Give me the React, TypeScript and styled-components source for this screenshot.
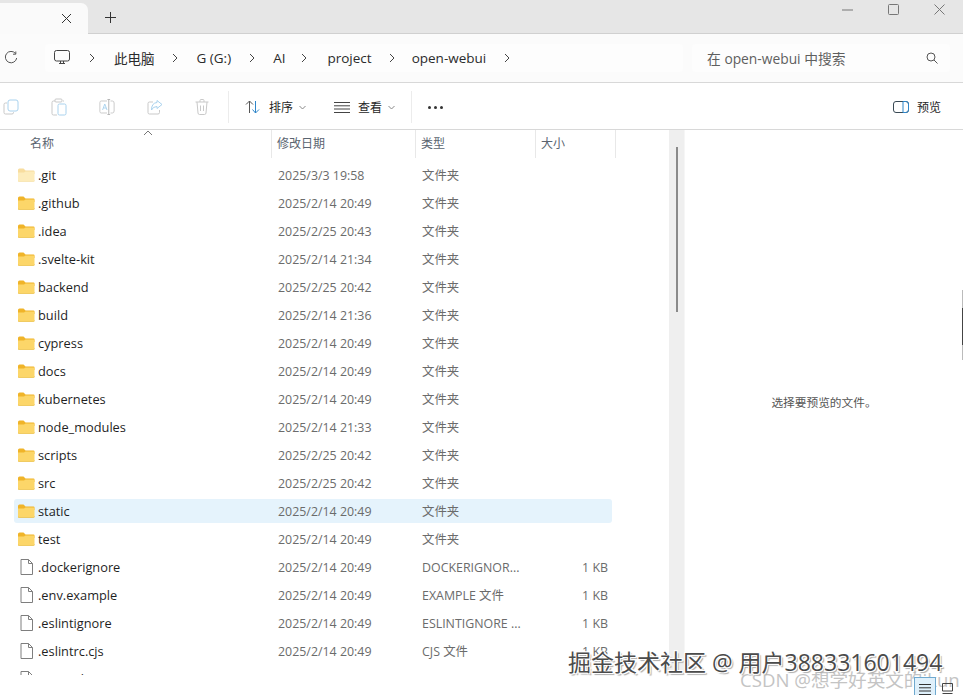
import React from "react";
import styled, { createGlobalStyle } from "styled-components";

const fontStack = `"Open Sans", "Noto Sans CJK SC", sans-serif`;

const GlobalStyle = createGlobalStyle`
  html, body {
    margin: 0;
    padding: 0;
    background: #fff;
    overflow: hidden;
  }
  * {
    box-sizing: border-box;
  }
`;

const Page = styled.div`
  position: relative;
  width: 963px;
  height: 695px;
  overflow: hidden;
  display: flex;
  flex-direction: column;
  font-family: ${fontStack};
  color: #1c1c1c;
  background: #fff;
`;

/* title bar */
const TitleBar = styled.div`
  height: 34px;
  flex: none;
  display: flex;
  align-items: flex-end;
  background: #e6e6e6;
  border-bottom: 1px solid #d0d0d0;
`;

const ActiveTab = styled.div`
  width: 88px;
  height: 31px;
  margin-bottom: -1px;
  padding: 0 16px 1px 0;
  display: flex;
  align-items: center;
  justify-content: flex-end;
  background: #fafafa;
  border-top-right-radius: 7px;
`;

const NewTab = styled.div`
  width: 44px;
  height: 30px;
  padding-bottom: 1px;
  display: flex;
  align-items: center;
  justify-content: center;
`;

const WindowButtons = styled.div`
  margin-left: auto;
  height: 34px;
  padding: 0 18px 13px 0;
  display: flex;
  align-items: center;
  gap: 35px;
`;

/* address bar */
const AddressBar = styled.div`
  height: 49px;
  flex: none;
  display: flex;
  align-items: center;
  padding: 0 0 1px 4px;
  background: #fbfbfb;
  border-bottom: 1px solid #d8d8d8;
`;

const Breadcrumb = styled.div`
  width: 638px;
  height: 28px;
  margin-left: 27px;
  padding-left: 9px;
  display: flex;
  align-items: center;
  background: #fdfdfd;
  border-radius: 4px;
  font-size: 13.5px;
`;

const Crumb = styled.span`
  color: #2b2b2b;
  white-space: nowrap;
`;

const Chevron = styled.svg<{ $left: number; $right: number }>`
  width: 8px;
  height: 10px;
  flex: none;
  margin: 0 ${(p) => p.$right}px 0 ${(p) => p.$left}px;
`;

const SearchBox = styled.div`
  width: 258px;
  height: 28px;
  margin-left: 9px;
  padding: 0 12px 0 15px;
  display: flex;
  align-items: center;
  justify-content: space-between;
  background: #fdfdfd;
  border-radius: 4px;
  font-size: 13.8px;
  color: #5f5f5f;
`;

/* command bar */
const CommandBar = styled.div`
  height: 47px;
  flex: none;
  display: flex;
  align-items: center;
  padding: 2px 0 0 3px;
  background: #fff;
  border-bottom: 1px solid #d8d8d8;
`;

const GhostIcons = styled.div`
  display: flex;
  align-items: center;
  gap: 32px;
  width: 225px;
`;

const BarDivider = styled.div`
  width: 1px;
  height: 32px;
  flex: none;
  background: #ececec;
`;

const BarButton = styled.div<{ $pad: number; $width: number }>`
  width: ${(p) => p.$width}px;
  padding-left: ${(p) => p.$pad}px;
  display: flex;
  align-items: center;
  gap: 8px;
  font-size: 12px;
  color: #262626;
  white-space: nowrap;
`;

const Caret = styled.svg`
  width: 7px;
  height: 5px;
  margin-left: -2px;
`;

const MoreDots = styled.div`
  margin-left: 16px;
  display: flex;
  gap: 3px;
`;

const Dot = styled.i`
  display: block;
  width: 3px;
  height: 3px;
  border-radius: 50%;
  background: #333;
`;

const PreviewButton = styled.div`
  margin-left: auto;
  padding-right: 22px;
  display: flex;
  align-items: center;
  gap: 8px;
  font-size: 12px;
  color: #262626;
`;

/* body */
const Body = styled.div`
  flex: 1;
  min-height: 0;
  display: flex;
  align-items: flex-start;
`;

const Explorer = styled.div`
  width: 669px;
  height: 545px;
  flex: none;
  overflow: hidden;
  position: relative;
`;

const HeaderRow = styled.div`
  height: 28px;
  display: grid;
  grid-template-columns: 272px 144px 120px 80px;
  font-size: 12px;
  color: #5a6470;
  margin-bottom: 5px;
`;

const HeaderCell = styled.div<{ $first?: boolean }>`
  position: relative;
  display: flex;
  align-items: center;
  padding-left: ${(p) => (p.$first ? 30 : 5)}px;
  padding-bottom: 3px;
  border-right: 1px solid #e8e8e8;
`;

const SortArrow = styled.svg`
  position: absolute;
  left: 143px;
  top: 0;
  width: 10px;
  height: 6px;
`;

const Row = styled.div<{ $selected?: boolean }>`
  width: 598px;
  height: 24px;
  margin: 0 0 4px 14px;
  display: grid;
  grid-template-columns: 264px 144px 120px 66px;
  align-items: center;
  font-size: 12.4px;
  border-radius: 3px;
  background: ${(p) => (p.$selected ? "#e5f3fc" : "transparent")};
`;

const NameCell = styled.div`
  display: flex;
  align-items: center;
  gap: 3px;
  padding-left: 4px;
  font-size: 12.8px;
  color: #1f1f1f;
  white-space: nowrap;
`;

const IconSlot = styled.span`
  width: 17px;
  height: 16px;
  display: flex;
  justify-content: center;
  align-items: center;
  flex: none;
`;

const Cell = styled.div`
  color: #6b6b6b;
  white-space: nowrap;
  overflow: hidden;
`;

const SizeCell = styled(Cell)`
  text-align: right;
`;

const ScrollTrack = styled.div`
  width: 16px;
  height: 545px;
  flex: none;
  padding: 17px 0 0 7px;
  background: #efefef;
  border-right: 1px solid #f6f6f6;
`;

const ScrollThumb = styled.div`
  width: 2px;
  height: 165px;
  background: #8a8a8a;
`;

const PreviewPane = styled.div`
  flex: 1;
  height: 545px;
  padding-bottom: 2px;
  display: flex;
  align-items: center;
  justify-content: center;
  font-size: 11.7px;
  color: #555;
`;

/* things lying over the page */
const Watermark = styled.div`
  position: absolute;
  left: 568px;
  top: 648px;
  font-size: 23px;
  line-height: 28px;
  color: #4b4b4b;
  white-space: nowrap;
  text-shadow: 1px 1px 0 #fff, -1px -1px 0 #fff, 1px -1px 0 #fff, -1px 1px 0 #fff, 2px 2px 1px #aaa;
`;

const SubMark = styled.div`
  position: absolute;
  left: 740px;
  top: 669px;
  font-size: 18.6px;
  line-height: 22px;
  color: #c4c4c4;
  white-space: nowrap;
`;

const ViewToggles = styled.div`
  position: absolute;
  left: 914px;
  top: 677px;
  display: flex;
  align-items: center;
`;

const ListToggle = styled.div`
  width: 22px;
  height: 18px;
  padding-top: 6px;
  display: flex;
  justify-content: center;
  background: #dff0fb;
  border: 1px solid #6fa9cf;
  border-bottom: none;
`;

const TileToggle = styled.div`
  width: 22px;
  height: 18px;
  padding-top: 6px;
  display: flex;
  justify-content: center;
`;

const EdgeMark = styled.div`
  position: absolute;
  right: 0;
  top: 290px;
  width: 1px;
  height: 70px;
  background: linear-gradient(#bbb 0 18px, #444 18px 55px, #bbb 55px);
`;

const FolderIcon = ({ faded }: { faded?: boolean }) => (
  <svg width="17" height="14" viewBox="0 0 17 14" opacity={faded ? 0.45 : 1}>
    <path d="M0 2 Q0 0.5 1.5 0.5 H5.5 L7.5 2.5 H15.5 Q16.5 2.5 16.5 3.5 V6 H0 Z" fill="#f0b429" />
    <path d="M0 4.5 H6 L7.5 3.5 H15.5 Q16.5 3.5 16.5 4.5 V12.5 Q16.5 13.5 15.5 13.5 H1 Q0 13.5 0 12.5 Z" fill="#fcd669" />
    <path d="M0 12.5 V13 Q0 13.5 1 13.5 H15.5 Q16.5 13.5 16.5 12.5" fill="none" stroke="#e8b52e" strokeWidth="0.6" />
  </svg>
);

const FileIcon = () => (
  <svg width="13" height="16" viewBox="0 0 13 16" fill="#fff" stroke="#7e7e7e" strokeWidth="1">
    <path d="M1 .5 H8.5 L12.5 4.5 V15.5 H1 Z" />
    <path d="M8.5 .5 V4.5 H12.5" fill="none" />
  </svg>
);

const ChevronRight = ({ left, right }: { left: number; right: number }) => (
  <Chevron $left={left} $right={right} viewBox="0 0 8 10" fill="none" stroke="#444" strokeWidth="1">
    <path d="M2 1 L6 5 L2 9" />
  </Chevron>
);

const CopyIcon = () => (
  <svg width="16" height="16" viewBox="0 0 16 16" fill="none">
    <path d="M4 4 H2.5 Q1 4 1 5.5 V13.5 Q1 15 2.5 15 H9 Q10.5 15 10.5 13.5 V13" stroke="#c9c9c9" />
    <rect x="5" y="1" width="10" height="11" rx="2" stroke="#a9d2ee" />
  </svg>
);

const PasteIcon = () => (
  <svg width="16" height="18" viewBox="0 0 16 18" fill="none">
    <path d="M4 3 H2.5 Q1 3 1 4.5 V15.5 Q1 17 2.5 17 H6 M12 3 H13" stroke="#c9c9c9" />
    <rect x="4" y="1" width="7" height="3" rx="1" stroke="#c9c9c9" />
    <rect x="7" y="6" width="8" height="11" rx="1.5" stroke="#a9d2ee" />
  </svg>
);

const RenameIcon = () => (
  <svg width="16" height="16" viewBox="0 0 18 16" fill="none" preserveAspectRatio="none">
    <path d="M9 2 H2.5 Q1 2 1 3.5 V12.5 Q1 14 2.5 14 H9 M13 2 H15 Q17 2 17 4 V12 Q17 14 15 14 H13" stroke="#c9c9c9" />
    <path d="M11 .5 V15.5 M9.5 .5 H12.5 M9.5 15.5 H12.5" stroke="#b3b3b3" />
    <path d="M4 11 L6.5 5 L9 11 M5 9 H8" stroke="#a9d2ee" />
  </svg>
);

const ShareIcon = () => (
  <svg width="16" height="16" viewBox="0 0 16 16" fill="none">
    <path d="M6 3 H2.5 Q1 3 1 4.5 V13.5 Q1 15 2.5 15 H11 Q12.5 15 12.5 13.5 V11" stroke="#c9c9c9" />
    <path d="M10 1.5 L15 5.5 L10 9.5 V7.5 Q6 7.5 4.5 11 Q4.5 4 10 3.5 Z" stroke="#a9d2ee" />
  </svg>
);

const TrashIcon = () => (
  <svg width="14" height="16" viewBox="0 0 14 16" fill="none" stroke="#c9c9c9">
    <path d="M.5 3 H13.5 M5 3 V1.5 Q5 .5 6 .5 H8 Q9 .5 9 1.5 V3" />
    <path d="M2 3 L3 14 Q3.1 15.5 4.5 15.5 H9.5 Q10.9 15.5 11 14 L12 3" />
    <path d="M5.5 6.5 V12 M8.5 6.5 V12" />
  </svg>
);

const SortIcon = () => (
  <svg width="16" height="14" viewBox="0 0 16 14" fill="none">
    <path d="M4.5 13 V1 M1 4.5 L4.5 1 L8 4.5" stroke="#555" />
    <path d="M10.5 1 V13 M7.5 9.5 L10.5 13 L14 9.5" stroke="#2f86c9" />
  </svg>
);

const LinesIcon = ({ width, color }: { width: number; color: string }) => (
  <svg width={width} height="11" viewBox={`0 0 ${width} 11`} stroke={color}>
    <path d={`M0 .5 H${width} M0 3.8 H${width} M0 7 H${width} M0 10.5 H${width}`} />
  </svg>
);

const DownCaret = () => (
  <Caret viewBox="0 0 7 5" fill="none" stroke="#888">
    <path d="M.5 1 L3.5 4 L6.5 1" />
  </Caret>
);

const rows = [
  { name: ".git", date: "2025/3/3 19:58", kind: "文件夹", faded: true },
  { name: ".github", date: "2025/2/14 20:49", kind: "文件夹" },
  { name: ".idea", date: "2025/2/25 20:43", kind: "文件夹" },
  { name: ".svelte-kit", date: "2025/2/14 21:34", kind: "文件夹" },
  { name: "backend", date: "2025/2/25 20:42", kind: "文件夹" },
  { name: "build", date: "2025/2/14 21:36", kind: "文件夹" },
  { name: "cypress", date: "2025/2/14 20:49", kind: "文件夹" },
  { name: "docs", date: "2025/2/14 20:49", kind: "文件夹" },
  { name: "kubernetes", date: "2025/2/14 20:49", kind: "文件夹" },
  { name: "node_modules", date: "2025/2/14 21:33", kind: "文件夹" },
  { name: "scripts", date: "2025/2/25 20:42", kind: "文件夹" },
  { name: "src", date: "2025/2/25 20:42", kind: "文件夹" },
  { name: "static", date: "2025/2/14 20:49", kind: "文件夹", selected: true },
  { name: "test", date: "2025/2/14 20:49", kind: "文件夹" },
  { name: ".dockerignore", date: "2025/2/14 20:49", kind: "DOCKERIGNOR...", size: "1 KB" },
  { name: ".env.example", date: "2025/2/14 20:49", kind: "EXAMPLE 文件", size: "1 KB" },
  { name: ".eslintignore", date: "2025/2/14 20:49", kind: "ESLINTIGNORE ...", size: "1 KB" },
  { name: ".eslintrc.cjs", date: "2025/2/14 20:49", kind: "CJS 文件", size: "1 KB" },
  { name: ".gitattributes", date: "2025/2/14 20:49", kind: "GITATTRIBUTES...", size: "1 KB" },
];

export default function App() {
  return (
    <Page>
      <GlobalStyle />
      <TitleBar>
        <ActiveTab>
          <svg width="11" height="11" viewBox="0 0 11 11" stroke="#333">
            <path d="M1 1 L10 10 M10 1 L1 10" />
          </svg>
        </ActiveTab>
        <NewTab>
          <svg width="11" height="11" viewBox="0 0 11 11" stroke="#333">
            <path d="M5.5 0 V11 M0 5.5 H11" />
          </svg>
        </NewTab>
        <WindowButtons>
          <svg width="11" height="2" viewBox="0 0 11 2" stroke="#777">
            <path d="M0 1 H11" />
          </svg>
          <svg width="11" height="11" viewBox="0 0 11 11" fill="none" stroke="#777">
            <rect x=".5" y=".5" width="10" height="10" rx="1" />
          </svg>
          <svg width="11" height="11" viewBox="0 0 11 11" stroke="#777">
            <path d="M.5 .5 L10.5 10.5 M10.5 .5 L.5 10.5" />
          </svg>
        </WindowButtons>
      </TitleBar>

      <AddressBar>
        <svg width="14" height="14" viewBox="0 0 14 14" fill="none" stroke="#555">
          <path d="M11.5 2.5 A5.7 5.7 0 1 0 12.7 7" />
          <path d="M11.8 .5 V3.2 H9" />
        </svg>
        <Breadcrumb>
          <svg width="16" height="15" viewBox="0 0 16 15" fill="none" stroke="#444">
            <rect x=".5" y=".5" width="15" height="10.5" rx="2" />
            <path d="M5 13.5 H11 M6.5 11 V13.5 M9.5 11 V13.5" />
          </svg>
          <ChevronRight left={18} right={18} />
          <Crumb>此电脑</Crumb>
          <ChevronRight left={16} right={18} />
          <Crumb>G (G:)</Crumb>
          <ChevronRight left={17} right={17} />
          <Crumb>AI</Crumb>
          <ChevronRight left={15} right={19} />
          <Crumb>project</Crumb>
          <ChevronRight left={16} right={16} />
          <Crumb>open-webui</Crumb>
          <ChevronRight left={17} right={0} />
        </Breadcrumb>
        <SearchBox>
          <span>在 open-webui 中搜索</span>
          <svg width="12" height="12" viewBox="0 0 12 12" fill="none" stroke="#555">
            <circle cx="5" cy="5" r="4" />
            <path d="M8 8 L11.5 11.5" />
          </svg>
        </SearchBox>
      </AddressBar>

      <CommandBar>
        <GhostIcons>
          <CopyIcon />
          <PasteIcon />
          <RenameIcon />
          <ShareIcon />
          <TrashIcon />
        </GhostIcons>
        <BarDivider />
        <BarButton $pad={16} $width={88}>
          <SortIcon />
          排序
          <DownCaret />
        </BarButton>
        <BarButton $pad={17} $width={94}>
          <LinesIcon width={16} color="#444" />
          查看
          <DownCaret />
        </BarButton>
        <BarDivider />
        <MoreDots>
          <Dot />
          <Dot />
          <Dot />
        </MoreDots>
        <PreviewButton>
          <svg width="16" height="12" viewBox="0 0 16 12" fill="none">
            <rect x=".5" y=".5" width="15" height="11" rx="2.5" stroke="#3a4a55" />
            <path d="M10 .5 H13 Q15.5 .5 15.5 3 V9 Q15.5 11.5 13 11.5 H10 Z" stroke="#2f86c9" />
          </svg>
          预览
        </PreviewButton>
      </CommandBar>

      <Body>
        <Explorer>
          <HeaderRow>
            <HeaderCell $first>
              名称
              <SortArrow viewBox="0 0 10 6" fill="none" stroke="#777">
                <path d="M1 5 L5 1 L9 5" />
              </SortArrow>
            </HeaderCell>
            <HeaderCell>修改日期</HeaderCell>
            <HeaderCell>类型</HeaderCell>
            <HeaderCell>大小</HeaderCell>
          </HeaderRow>
          {rows.map((row) => (
            <Row key={row.name} $selected={row.selected}>
              <NameCell>
                <IconSlot>{row.size ? <FileIcon /> : <FolderIcon faded={row.faded} />}</IconSlot>
                {row.name}
              </NameCell>
              <Cell>{row.date}</Cell>
              <Cell>{row.kind}</Cell>
              <SizeCell>{row.size}</SizeCell>
            </Row>
          ))}
        </Explorer>
        <ScrollTrack>
          <ScrollThumb />
        </ScrollTrack>
        <PreviewPane>选择要预览的文件。</PreviewPane>
      </Body>

      <SubMark>CSDN @想学好英文的ikun</SubMark>
      <Watermark>掘金技术社区 @ 用户388331601494</Watermark>
      <ViewToggles>
        <ListToggle>
          <LinesIcon width={12} color="#333" />
        </ListToggle>
        <TileToggle>
          <svg width="11" height="11" viewBox="0 0 11 11" fill="none" stroke="#444">
            <path d="M.5 .5 H10.5 V8 H.5 Z M.5 10.5 H10.5" />
          </svg>
        </TileToggle>
      </ViewToggles>
      <EdgeMark />
    </Page>
  );
}
